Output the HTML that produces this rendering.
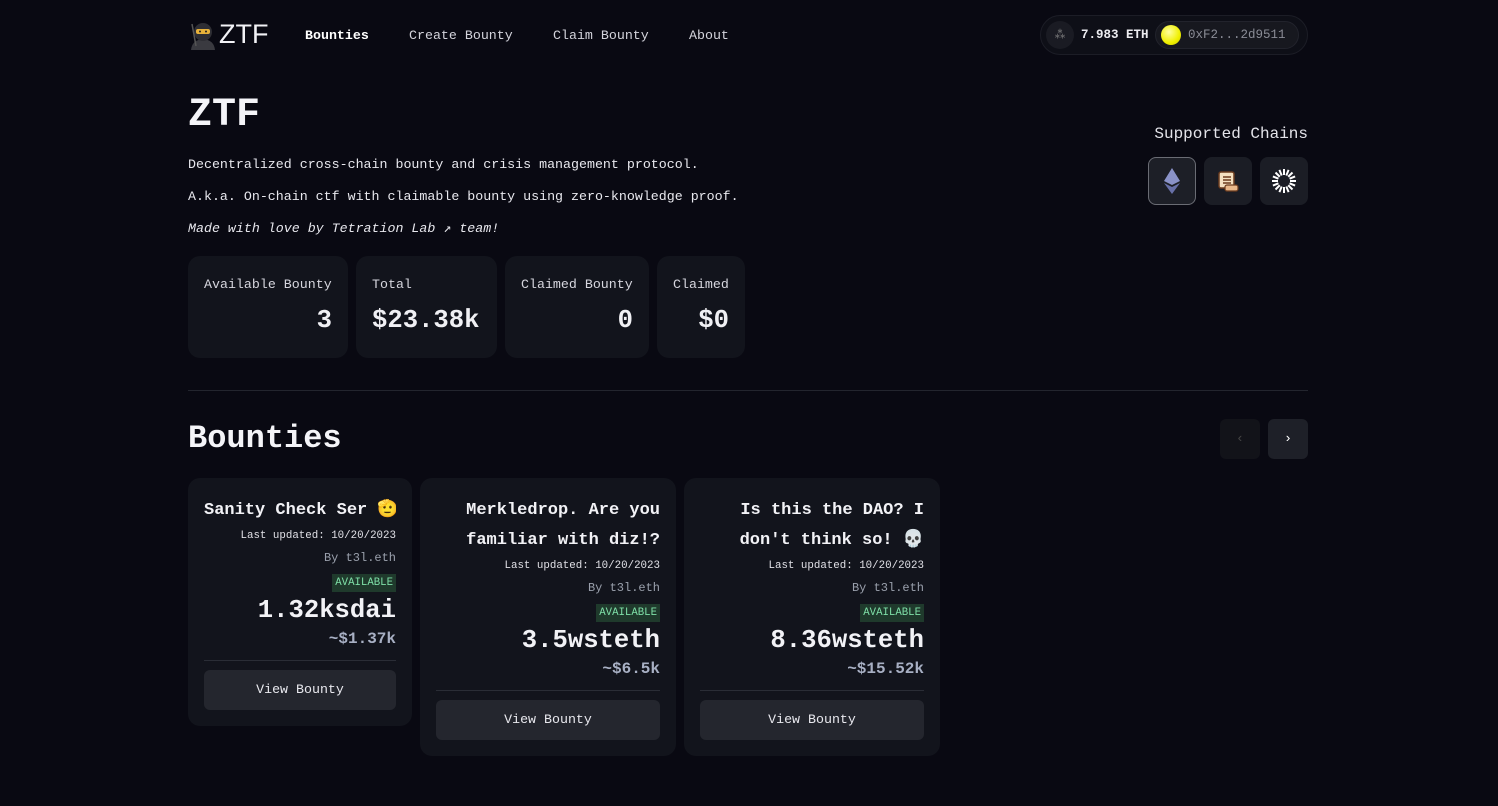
<!DOCTYPE html>
<html><head><meta charset="utf-8"><style>
*{box-sizing:border-box;margin:0;padding:0}
body{width:1498px;height:806px;background:#090912;color:#e8e8ee;font-family:"Liberation Mono","DejaVu Sans Mono","Noto Sans CJK JP",monospace;font-size:13.3px;overflow:hidden;position:relative}
.abs{position:absolute}
.nav a{position:absolute;top:28px;color:#d4d4dc;font-size:13.3px;text-decoration:none}
.card{position:absolute;background:#12141c;border-radius:12px}
.stat .l{position:absolute;left:16px;top:21px;color:#d6d6de}
.stat .v{position:absolute;right:16px;top:50px;font-size:25.6px;font-weight:bold;color:#f0f0f4}
.b{position:absolute;top:478px;background:#12141c;border-radius:12px;padding:18px 16px 16px;text-align:right}
.b h3{font-size:17px;font-weight:bold;line-height:30px;color:#f2f2f6}
.b .u{font-size:10.8px;line-height:20px;color:#e0e0e6}
.b .by{font-size:12px;line-height:24px;color:#9aa0ac}
.b .avw{height:22px;padding-top:4px}
.b .av{display:inline-block;background:#1f3a2c;color:#7fe0a8;font-size:10.7px;padding:2px 3px;line-height:14px;vertical-align:top}
.b .amt{font-size:25.6px;font-weight:bold;line-height:37px;color:#f2f2f6}
.b .usd{font-size:16px;font-weight:bold;color:#a8b0c4;line-height:20px}
.b hr{border:0;border-top:1px solid #2a2d36;margin:11px 0 9px}
.b .btn{background:#24262e;border-radius:6px;height:40px;line-height:40px;text-align:center;color:#e8e8ee;font-size:13.3px}
.chain{position:absolute;top:157px;width:48px;height:48px;border-radius:8px;background:#1b1d25;display:flex;align-items:center;justify-content:center}
</style></head><body>
<div class="abs" style="left:188px;top:20px;width:30px;height:30px;">
<svg width="30" height="30" viewBox="0 0 30 30"><path d="M3 30 Q4 20 15 19 Q26 20 27 30Z" fill="#3a3a40"/><circle cx="15" cy="12" r="9" fill="#2e2e34"/><rect x="8" y="9" width="14" height="5" rx="2" fill="#e8b23a"/><circle cx="12" cy="11.5" r="1" fill="#222"/><circle cx="18" cy="11.5" r="1" fill="#222"/><line x1="4" y1="4" x2="8" y2="26" stroke="#555" stroke-width="1.5"/></svg></div>
<div class="abs" style="left:219px;top:19px;font-family:'Liberation Sans',sans-serif;font-size:27px;color:#f2f2f6;">ZTF</div>
<div class="nav"><a style="left:305px;font-weight:bold;color:#fff">Bounties</a><a style="left:409px">Create Bounty</a><a style="left:553px">Claim Bounty</a><a style="left:689px">About</a></div>
<div class="abs" style="left:1040px;top:15px;width:268px;height:40px;border-radius:20px;background:#0e0f17;border:1px solid #1c1d26"></div>
<div class="abs" style="left:1046px;top:21px;width:28px;height:28px;border-radius:14px;background:#1a1b23;color:#888;font-size:12px;text-align:center;line-height:28px">⁂</div>
<div class="abs" style="left:1081px;top:28px;font-weight:bold;font-size:12.5px;color:#ececf0">7.983 ETH</div>
<div class="abs" style="left:1155px;top:21px;width:144px;height:28px;border-radius:14px;background:#17181f;border:1px solid #22232c"></div>
<div class="abs" style="left:1161px;top:25px;width:20px;height:20px;border-radius:10px;background:radial-gradient(circle at 40% 35%,#ffffa0,#f0f000 60%,#c8c800)"></div>
<div class="abs" style="left:1188px;top:28px;font-size:12.5px;color:#8a8c96">0xF2...2d9511</div>

<div class="abs" style="left:188px;top:93px;font-size:40px;font-weight:bold;color:#f4f4f8">ZTF</div>
<div class="abs" style="left:188px;top:157px;">Decentralized cross-chain bounty and crisis management protocol.</div>
<div class="abs" style="left:188px;top:189px;">A.k.a. On-chain ctf with claimable bounty using zero-knowledge proof.</div>
<div class="abs" style="left:188px;top:221px;font-style:italic">Made with love by Tetration Lab ↗ team!</div>

<div class="abs" style="right:190px;top:125px;font-size:16px;color:#e4e4ea">Supported Chains</div>
<div class="chain" style="left:1148px;border:1px solid #6a6c74;background:#1d1f27"><svg width="16" height="26" viewBox="0 0 16 26"><path d="M8 0L0 13L8 17L16 13Z" fill="#8a92c8"/><path d="M8 19L0 15L8 26L16 15Z" fill="#6870a8"/></svg></div>
<div class="chain" style="left:1204px"><svg width="24" height="22" viewBox="0 0 24 22"><rect x="3" y="2" width="15" height="16" rx="2" fill="#f3dfc0" stroke="#6b3b1e" stroke-width="1.5"/><line x1="7" y1="7" x2="15" y2="7" stroke="#6b3b1e" stroke-width="1.5"/><line x1="7" y1="10" x2="15" y2="10" stroke="#6b3b1e" stroke-width="1.5"/><line x1="7" y1="13" x2="15" y2="13" stroke="#6b3b1e" stroke-width="1.5"/><rect x="9" y="15" width="13" height="6" rx="2" fill="#e9b88a" stroke="#6b3b1e" stroke-width="1.2"/></svg></div>
<div class="chain" style="left:1260px"><svg width="26" height="26" viewBox="0 0 26 26" stroke="#fff" stroke-width="2"><g id="r"><line x1="13" y1="1" x2="13" y2="7"/><line x1="13" y1="19" x2="13" y2="25"/><line x1="1" y1="13" x2="7" y2="13"/><line x1="19" y1="13" x2="25" y2="13"/></g><use href="#r" transform="rotate(22.5 13 13)"/><use href="#r" transform="rotate(45 13 13)"/><use href="#r" transform="rotate(67.5 13 13)"/></svg></div>

<div class="card stat" style="left:188px;top:256px;width:160px;height:102px"><div class="l">Available Bounty</div><div class="v">3</div></div>
<div class="card stat" style="left:356px;top:256px;width:141px;height:102px"><div class="l">Total</div><div class="v" style="left:16px;right:auto">$23.38k</div></div>
<div class="card stat" style="left:505px;top:256px;width:144px;height:102px"><div class="l">Claimed Bounty</div><div class="v">0</div></div>
<div class="card stat" style="left:657px;top:256px;width:88px;height:102px"><div class="l">Claimed</div><div class="v">$0</div></div>

<div class="abs" style="left:188px;top:390px;width:1120px;border-top:1px solid #23252e"></div>
<div class="abs" style="left:188px;top:420px;font-size:32px;font-weight:bold;color:#f4f4f8">Bounties</div>
<div class="abs" style="left:1220px;top:419px;width:40px;height:40px;border-radius:6px;background:#121319;color:#444;text-align:center;line-height:40px">‹</div>
<div class="abs" style="left:1268px;top:419px;width:40px;height:40px;border-radius:6px;background:#1e2028;color:#fff;text-align:center;line-height:40px">›</div>

<div class="b" style="left:188px;width:224px"><h3 style="white-space:nowrap;overflow:hidden;text-align:left">Sanity Check Ser 🫡</h3><div class="u">Last updated: 10/20/2023</div><div class="by">By t3l.eth</div><div class="avw"><span class="av">AVAILABLE</span></div><div class="amt">1.32ksdai</div><div class="usd">~$1.37k</div><hr><div class="btn">View Bounty</div></div>
<div class="b" style="left:420px;width:256px"><h3>Merkledrop. Are you familiar with diz!?</h3><div class="u">Last updated: 10/20/2023</div><div class="by">By t3l.eth</div><div class="avw"><span class="av">AVAILABLE</span></div><div class="amt">3.5wsteth</div><div class="usd">~$6.5k</div><hr><div class="btn">View Bounty</div></div>
<div class="b" style="left:684px;width:256px"><h3>Is this the DAO? I don't think so! 💀</h3><div class="u">Last updated: 10/20/2023</div><div class="by">By t3l.eth</div><div class="avw"><span class="av">AVAILABLE</span></div><div class="amt">8.36wsteth</div><div class="usd">~$15.52k</div><hr><div class="btn">View Bounty</div></div>
</body></html>
